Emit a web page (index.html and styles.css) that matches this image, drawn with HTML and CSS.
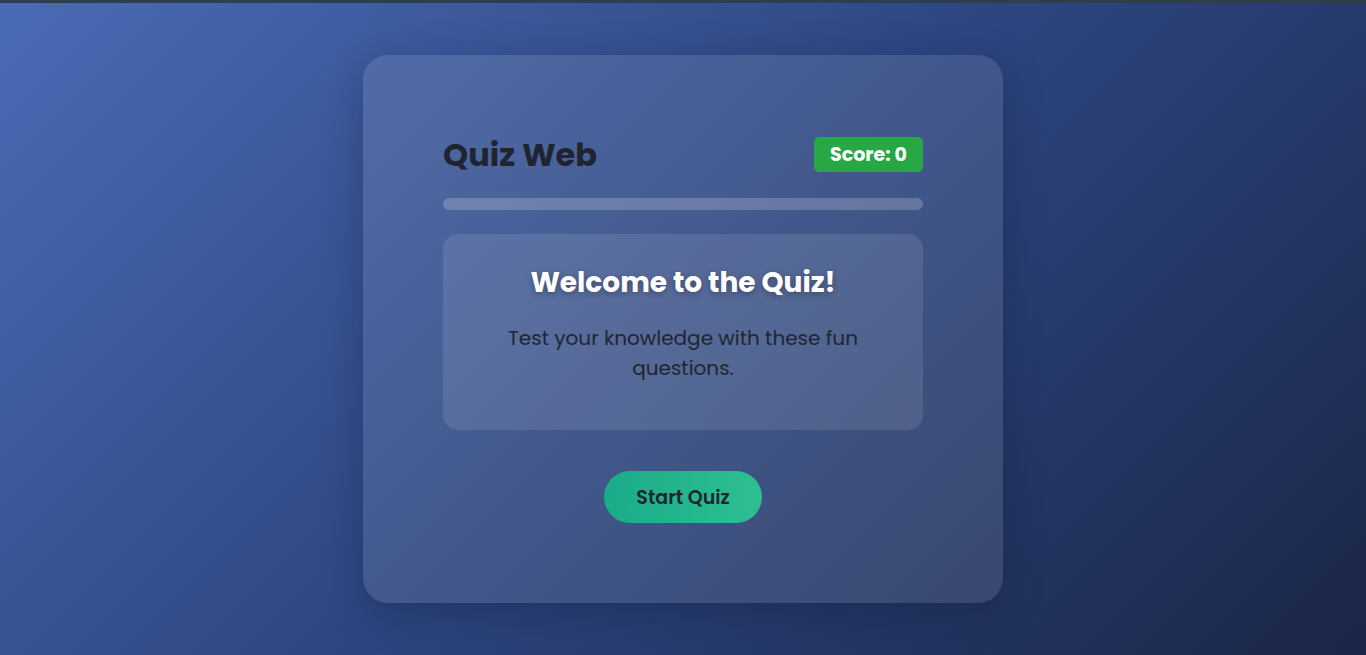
FILE: index.html
```html
<!DOCTYPE html>
<html lang="en">
<head>
<meta charset="utf-8">
<title>Quiz Web</title>
<link rel="stylesheet" href="styles.css">
</head>
<body>
<div class="topbar"></div>
<main class="page">
  <section class="card">
    <header class="card-header">
      <h1 class="title">Quiz Web</h1>
      <div class="score">Score: 0</div>
    </header>
    <div class="progress"><div class="progress-fill" style="width:0%"></div></div>
    <div class="welcome">
      <h2 class="welcome-title">Welcome to the Quiz!</h2>
      <p class="welcome-text">Test your knowledge with these fun questions.</p>
    </div>
    <div class="actions">
      <button class="start-btn">Start Quiz</button>
    </div>
  </section>
</main>
</body>
</html>
```

FILE: styles.css
```css
* { box-sizing: border-box; }
html, body { margin: 0; padding: 0; height: 100%; }
body {
  font-family: "Poppins", "Open Sans", "DejaVu Sans", sans-serif;
  background: linear-gradient(135deg, #4a6bb6 0%, #2d4680 50%, #1a2647 100%);
  display: flex;
  flex-direction: column;
  overflow: hidden;
}
.topbar { height: 3px; background: #2d3f4a; flex: none; }
.page {
  flex: 1;
  display: flex;
  align-items: center;
  justify-content: center;
}
.card {
  width: 640px;
  height: 548px;
  padding: 80px;
  border-radius: 25px;
  background: rgba(255, 255, 255, 0.1);
  box-shadow: 0 10px 40px rgba(10, 20, 45, 0.3);
}
.card-header {
  display: flex;
  justify-content: space-between;
  align-items: center;
  height: 40px;
}
.title {
  margin: 0;
  font-size: 32px;
  font-weight: 700;
  color: #1f2430;
}
.score {
  background: #28a745;
  color: #fff;
  font-weight: 700;
  font-size: 19px;
  height: 35px;
  line-height: 35px;
  padding: 0 16px;
  border-radius: 5px;
  margin-top: -1px;
}
.progress {
  margin-top: 23px;
  height: 12px;
  border-radius: 6px;
  background: rgba(255, 255, 255, 0.2);
  overflow: hidden;
}
.progress-fill { height: 100%; background: #2ebf91; }
.welcome {
  margin-top: 24px;
  height: 196px;
  border-radius: 15px;
  background: rgba(255, 255, 255, 0.1);
  padding: 28px 30px 0;
  text-align: center;
}
.welcome-title {
  margin: 0;
  font-size: 28px;
  line-height: 42px;
  font-weight: 700;
  color: #fff;
  text-shadow: 0 2px 6px rgba(0, 0, 0, 0.3);
}
.welcome-text {
  margin: 19px auto 0;
  max-width: 400px;
  font-size: 20px;
  line-height: 30px;
  color: #20252f;
}
.actions {
  display: flex;
  justify-content: center;
  margin-top: 41px;
}
.start-btn {
  width: 158px;
  height: 52px;
  border: none;
  border-radius: 26px;
  background: linear-gradient(90deg, #1aab8a, #2ebf91);
  font-family: inherit;
  font-weight: 600;
  font-size: 19px;
  color: #1f2430;
}
```
